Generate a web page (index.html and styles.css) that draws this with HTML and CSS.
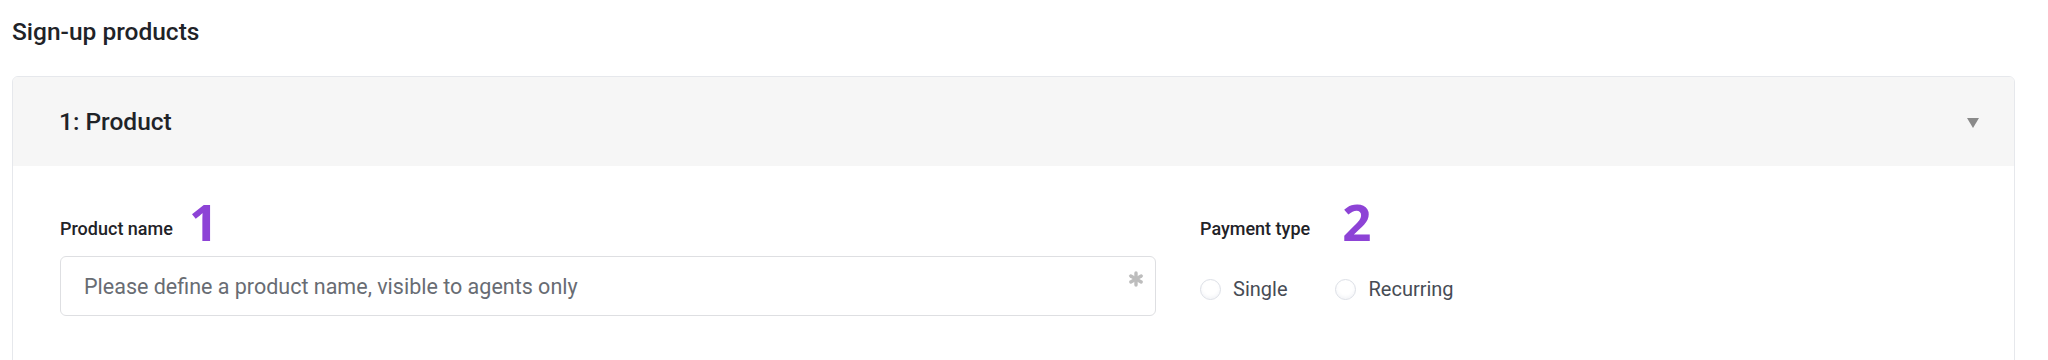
FILE: index.html
```html
<!DOCTYPE html>
<html lang="en">
<head>
    <meta charset="UTF-8">
    <meta name="viewport" content="width=device-width, initial-scale=1.0">
    <title>Sign-up products</title>
    <link rel="stylesheet" href="styles.css">
</head>
<body>
    <div class="page">
        <h2 class="section-title">Sign-up products</h2>
        <div class="product-card">
            <div class="product-header">
                <span class="product-title">1: Product</span>
                <svg class="caret" width="12" height="10" viewBox="0 0 12 10">
                    <polygon points="0,0 12,0 6,10" fill="#8a8a8a"/>
                </svg>
            </div>
            <div class="product-body">
                <div class="field">
                    <label class="field-label" for="productName">Product name<span class="marker marker-one">1</span></label>
                    <div class="input-wrap">
                        <input type="text" id="productName" placeholder="Please define a product name, visible to agents only">
                        <svg class="required" width="16" height="16" viewBox="0 0 16 16">
                            <g stroke="#bdbdbd" stroke-width="3.4" stroke-linecap="round">
                                <line x1="8" y1="2" x2="8" y2="14"/>
                                <line x1="2.8" y1="5" x2="13.2" y2="11"/>
                                <line x1="2.8" y1="11" x2="13.2" y2="5"/>
                            </g>
                        </svg>
                    </div>
                </div>
                <div class="field">
                    <span class="field-label">Payment type<span class="marker marker-two">2</span></span>
                    <div class="radio-group">
                        <label class="radio"><span class="radio-dot"></span>Single</label>
                        <label class="radio"><span class="radio-dot"></span>Recurring</label>
                    </div>
                </div>
            </div>
        </div>
    </div>
</body>
</html>
```

FILE: styles.css
```css
body {
    font-family: Roboto, "Liberation Sans", Arial, sans-serif;
    margin: 0;
    background-color: #fff;
    color: #1f2328;
}

.page {
    padding: 18px 33px 0 12px;
}

.section-title {
    margin: 0 0 30px;
    font-size: 24.5px;
    line-height: 28px;
    font-weight: 500;
    color: #1f2328;
}

.product-card {
    border: 1px solid #e6e8ec;
    border-radius: 6px;
    overflow: hidden;
    height: 300px;
}

.product-header {
    display: flex;
    align-items: center;
    justify-content: space-between;
    height: 89px;
    padding: 0 35px 0 46px;
    background-color: #f6f6f6;
}

.product-title {
    font-size: 24.5px;
    font-weight: 500;
    color: #1f2328;
}

.caret {
    display: block;
    margin-top: 2px;
}

.product-body {
    display: grid;
    grid-template-columns: 1096px 1fr;
    column-gap: 44px;
    padding: 44px 46px 0 47px;
}

.field-label {
    display: block;
    font-size: 18px;
    line-height: 22px;
    font-weight: 500;
    color: #1f2328;
    margin-bottom: 16px;
}

.marker {
    display: inline-block;
    font-family: "Open Sans", Lato, sans-serif;
    font-weight: 700;
    font-size: 51px;
    line-height: 22px;
    color: #8d43d6;
    vertical-align: -6px;
}

.marker-one {
    margin-left: 16px;
}

.marker-two {
    margin-left: 32px;
}

.input-wrap {
    position: relative;
}

.input-wrap input {
    box-sizing: border-box;
    width: 100%;
    height: 60px;
    padding: 0 40px 0 23px;
    border: 1px solid #dedfe2;
    border-radius: 6px;
    font-family: Roboto, "Liberation Sans", Arial, sans-serif;
    font-size: 21.5px;
    color: #333;
    outline: none;
}

.input-wrap input::placeholder {
    color: #686c73;
}

.required {
    position: absolute;
    top: 15px;
    right: 12px;
}

.radio-group {
    display: flex;
    align-items: center;
    gap: 48px;
    height: 60px;
    padding-top: 6px;
    box-sizing: border-box;
}

.radio {
    display: flex;
    align-items: center;
    gap: 12px;
    font-size: 20px;
    color: #474c55;
}

.radio-dot {
    display: block;
    width: 19px;
    height: 19px;
    border: 1px solid #dcdfe6;
    border-radius: 50%;
    background-color: #fff;
    box-shadow: inset 0 -2px 3px rgba(120, 130, 160, 0.08);
}
```
